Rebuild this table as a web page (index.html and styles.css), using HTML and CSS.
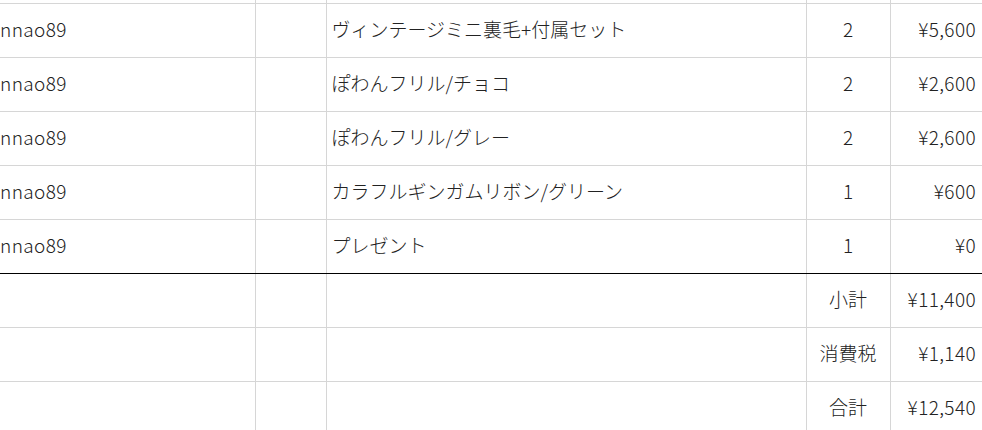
FILE: index.html
```html
<!DOCTYPE html>
<html lang="ja">
<head>
<meta charset="utf-8">
<link rel="stylesheet" href="styles.css">
</head>
<body>
<div class="wrap">
<table class="sheet">
  <colgroup>
    <col class="c-user"><col class="c-blank"><col class="c-item"><col class="c-qty"><col class="c-price">
  </colgroup>
  <tbody>
    <tr class="ghost"><td class="user"></td><td></td><td class="item"></td><td class="qty"></td><td class="price"></td></tr>
    <tr><td class="user">nnao89</td><td></td><td class="item">ヴィンテージミニ裏毛+付属セット</td><td class="qty">2</td><td class="price">¥5,600</td></tr>
    <tr><td class="user">nnao89</td><td></td><td class="item">ぽわんフリル/チョコ</td><td class="qty">2</td><td class="price">¥2,600</td></tr>
    <tr><td class="user">nnao89</td><td></td><td class="item">ぽわんフリル/グレー</td><td class="qty">2</td><td class="price">¥2,600</td></tr>
    <tr><td class="user">nnao89</td><td></td><td class="item">カラフルギンガムリボン/グリーン</td><td class="qty">1</td><td class="price">¥600</td></tr>
    <tr class="last"><td class="user">nnao89</td><td></td><td class="item">プレゼント</td><td class="qty">1</td><td class="price">¥0</td></tr>
    <tr><td></td><td></td><td></td><td class="qty">小計</td><td class="price">¥11,400</td></tr>
    <tr><td></td><td></td><td></td><td class="qty">消費税</td><td class="price">¥1,140</td></tr>
    <tr><td></td><td></td><td></td><td class="qty">合計</td><td class="price">¥12,540</td></tr>
  </tbody>
</table>
</div>
</body>
</html>
```
FILE: styles.css
```css
html, body {
  margin: 0;
  padding: 0;
  background: #ffffff;
}
body {
  font-family: "Noto Sans CJK JP", "Noto Sans", sans-serif;
  font-size: 19px;
  font-weight: 300;
  color: #222222;
  overflow: hidden;
}
.wrap {
  margin-top: -51px;
}
.sheet {
  border-collapse: collapse;
  table-layout: fixed;
  width: 983px;
}
.c-user { width: 255px; }
.c-blank { width: 71px; }
.c-item { width: 480px; }
.c-qty { width: 84px; }
.c-price { width: 93px; }
.sheet tr {
  height: 54px;
}
.sheet td {
  padding: 0 0 3px 0;
  border-left: 1px solid #d6d6d6;
  border-bottom: 1px solid #d6d6d6;
  vertical-align: middle;
  white-space: nowrap;
  line-height: 1;
}
.sheet td:first-child {
  border-left: none;
}
.sheet tr.last td {
  border-bottom: 1px solid #000000;
}
.user {
  letter-spacing: 0.02em;
}
.sheet td.item {
  padding-left: 5px;
}
.qty {
  text-align: center;
}
.sheet td.price {
  text-align: right;
  padding-right: 7px;
  letter-spacing: 0.02em;
}
```
